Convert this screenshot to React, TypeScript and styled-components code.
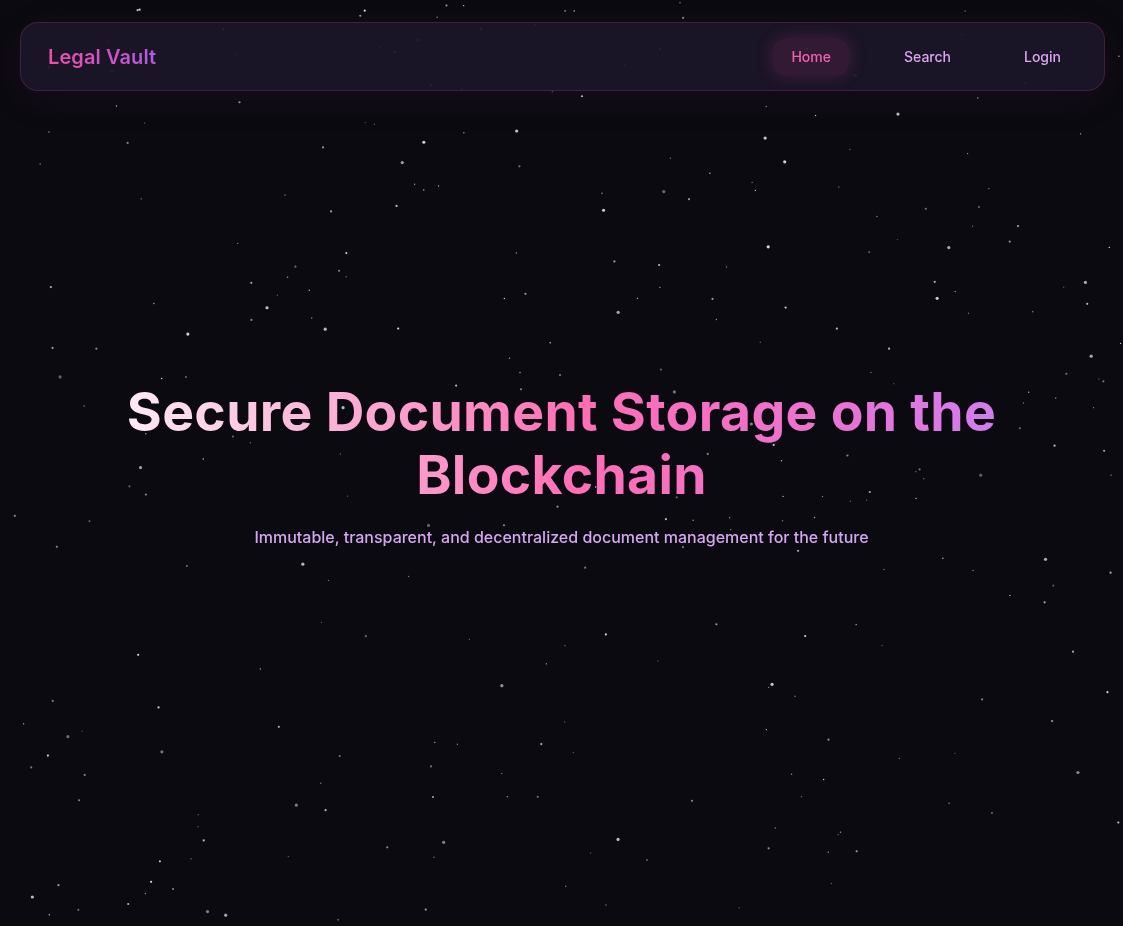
import React from "react";
import styled, { createGlobalStyle } from "styled-components";

const GlobalStyle = createGlobalStyle`
  * { box-sizing: border-box; }
  html, body { margin: 0; padding: 0; background: #0b0a10; }
  body { font-family: Inter, "Noto Sans", sans-serif; color: #fff; overflow: hidden; }
`;

function makeStars(count: number) {
  let seed = 1337;
  const rand = () => {
    seed = (seed * 16807) % 2147483647;
    return (seed - 1) / 2147483646;
  };
  const stars: { x: number; y: number; r: number; o: number }[] = [];
  for (let i = 0; i < count; i++) {
    const big = rand();
    stars.push({
      x: rand() * 1123,
      y: rand() * 926,
      r: big > 0.85 ? 1.6 : big > 0.5 ? 1.1 : 0.7,
      o: 0.3 + rand() * 0.55,
    });
  }
  return stars;
}

const STARS = makeStars(320);

const Page = styled.div`
  position: relative;
  width: 100%;
  min-height: 100vh;
  background: #0b0a10;
`;

const StarField = styled.svg`
  position: fixed;
  inset: 0;
  width: 100%;
  height: 100%;
  pointer-events: none;
  z-index: 0;
`;

const NavBar = styled.nav`
  position: fixed;
  top: 22px;
  left: 20px;
  right: 18px;
  height: 69px;
  z-index: 2;
  display: flex;
  align-items: center;
  justify-content: space-between;
  padding: 0 25px 0 27px;
  border-radius: 18px;
  background: rgba(27, 22, 40, 0.92);
  border: 1px solid rgba(236, 72, 153, 0.2);
  box-shadow: 0 8px 40px rgba(168, 60, 160, 0.08);
`;

const Logo = styled.div`
  font-family: Inter, sans-serif;
  font-size: 20px;
  font-weight: 600;
  letter-spacing: 0.1px;
  background: linear-gradient(90deg, #ec4fa6, #b35ae0);
  -webkit-background-clip: text;
  background-clip: text;
  color: transparent;
`;

const NavLinks = styled.div`
  display: flex;
  align-items: center;
  gap: 37px;
`;

const NavLink = styled.a<{ $active?: boolean }>`
  display: inline-flex;
  align-items: center;
  height: 36px;
  padding: 0 18px;
  border-radius: 12px;
  font-size: 14px;
  font-weight: 500;
  text-decoration: none;
  cursor: pointer;
  color: ${(p) => (p.$active ? "#f062b0" : "#dba6ee")};
  background: ${(p) => (p.$active ? "rgba(236, 72, 153, 0.12)" : "transparent")};
  box-shadow: ${(p) => (p.$active ? "0 0 18px rgba(236, 72, 153, 0.22)" : "none")};
`;

const Hero = styled.main`
  position: relative;
  z-index: 1;
  min-height: 100vh;
  display: flex;
  flex-direction: column;
  align-items: center;
  justify-content: center;
  text-align: center;
`;

const Title = styled.h1`
  margin: 0;
  max-width: 900px;
  font-family: Inter, sans-serif;
  font-size: 53.5px;
  font-weight: 700;
  line-height: 63px;
  letter-spacing: 0.3px;
  background: linear-gradient(90deg, #fdeef7 0%, #fbb0d6 25%, #ff6eb5 52%, #ec72cf 78%, #cf7df0 100%);
  -webkit-background-clip: text;
  background-clip: text;
  color: transparent;
`;

const Subtitle = styled.p`
  margin: 21px 0 0;
  font-size: 16px;
  font-weight: 500;
  color: #d5a6f2;
`;

export default function App() {
  return (
    <Page>
      <GlobalStyle />
      <StarField viewBox="0 0 1123 926" preserveAspectRatio="none">
        {STARS.map((s, i) => (
          <circle key={i} cx={s.x} cy={s.y} r={s.r} fill="#ffffff" opacity={s.o} />
        ))}
      </StarField>
      <NavBar>
        <Logo>Legal Vault</Logo>
        <NavLinks>
          <NavLink $active>Home</NavLink>
          <NavLink>Search</NavLink>
          <NavLink>Login</NavLink>
        </NavLinks>
      </NavBar>
      <Hero>
        <Title>Secure Document Storage on the Blockchain</Title>
        <Subtitle>Immutable, transparent, and decentralized document management for the future</Subtitle>
      </Hero>
    </Page>
  );
}
